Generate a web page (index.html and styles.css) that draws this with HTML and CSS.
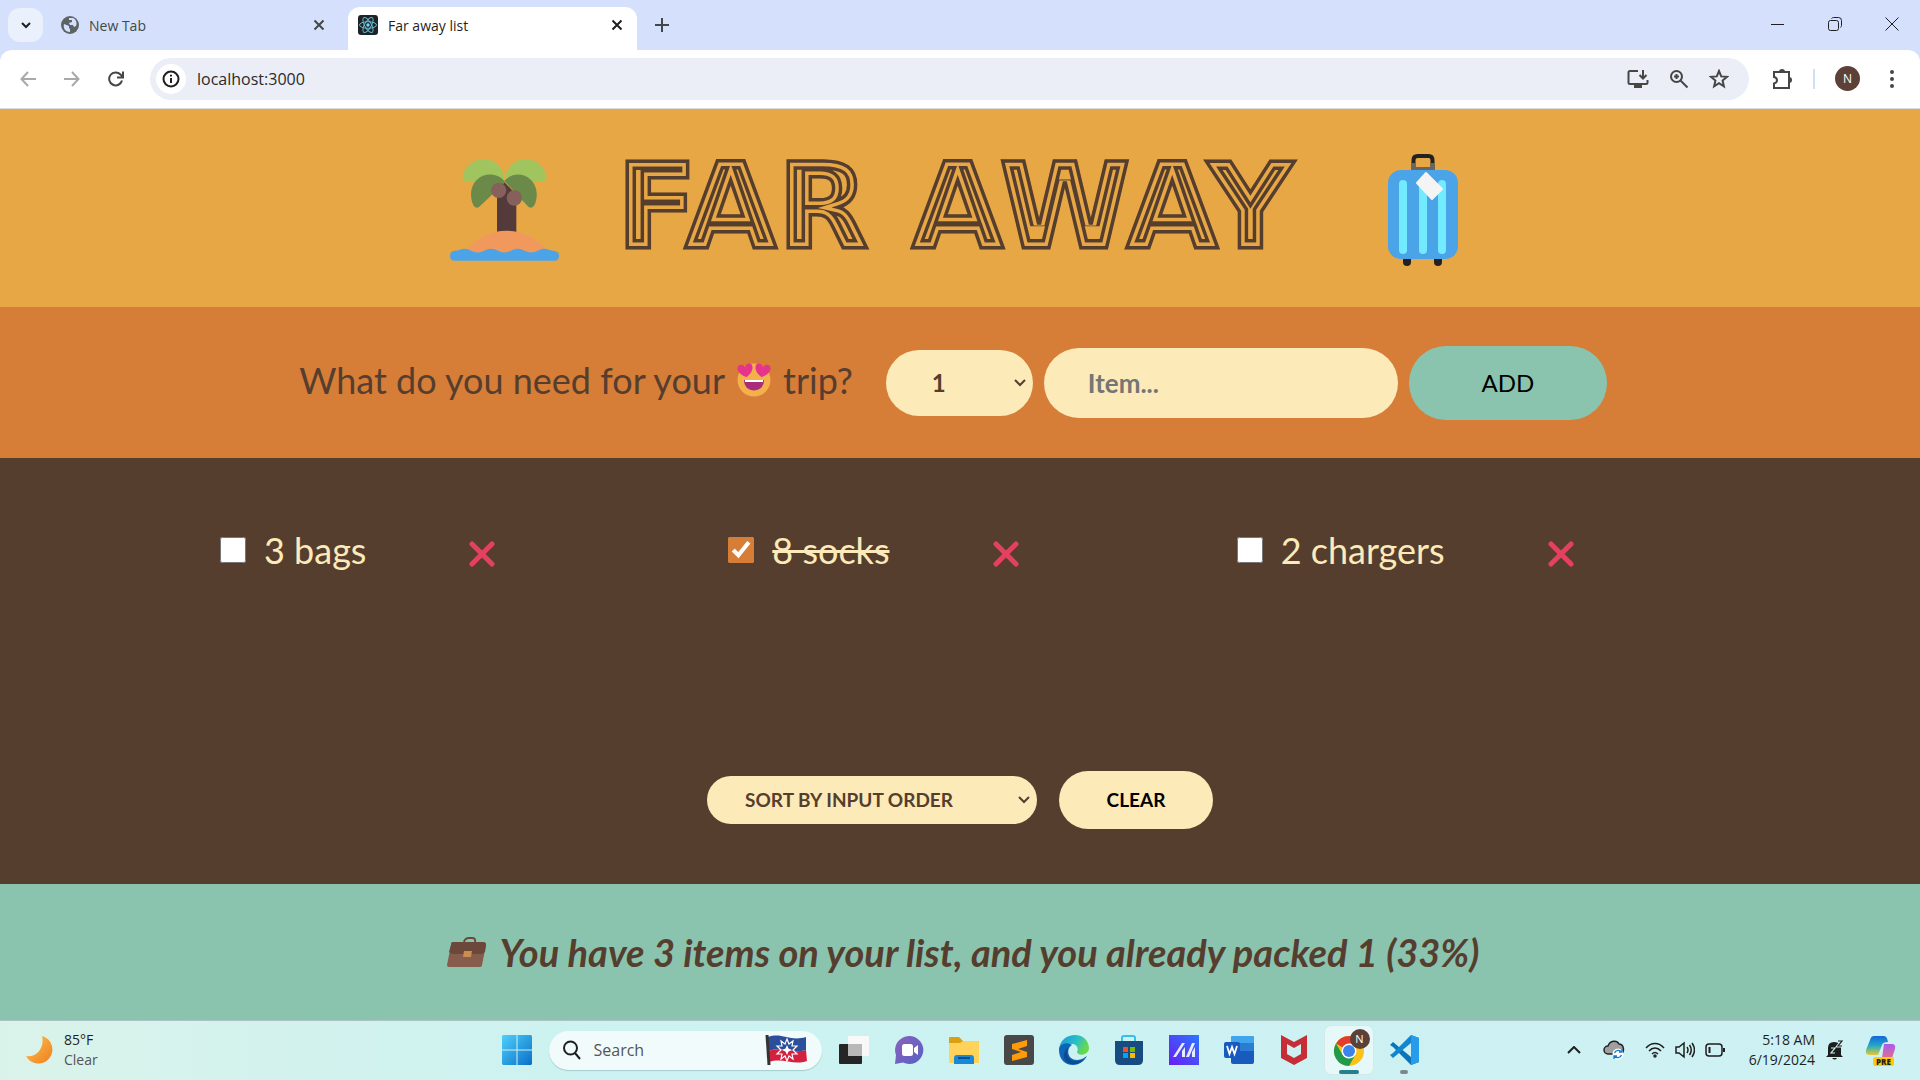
FILE: index.html
```html
<!DOCTYPE html>
<html lang="en">
<head>
<meta charset="utf-8">
<title>Far away list</title>
<link rel="stylesheet" href="styles.css">
</head>
<body>
<div class="tabstrip">
  <button class="tab-search" aria-label="Search tabs"><svg width="12" height="8" viewBox="0 0 12 8" class="line bold"><path d="M2 2l4 4 4-4"/></svg></button>
  <div class="tab">
    <svg width="18" height="18" viewBox="0 0 18 18"><circle cx="9" cy="9" r="9" fill="#5f6368"/><path d="M3 8l5 2v2l1 1v3C4 16 2 12 3 8zM8 2l4 0c4 2 4 6 3 8l-2 1-1-2H9L8 7l3-1V4H8z" fill="#d5e1fc"/></svg>
    <span>New Tab</span>
    <button class="close" aria-label="Close tab"><svg width="12" height="12" viewBox="0 0 12 12" class="line"><path d="M1.500 1.500l9 9M10.500 1.500l-9 9"/></svg></button>
  </div>
  <div class="tab active">
    <svg width="20" height="20" viewBox="0 0 20 20"><rect width="20" height="20" rx="3" fill="#1f2326"/><g fill="none" stroke="#61b8d0"><ellipse cx="10" cy="10" rx="8.500" ry="3.300"/><ellipse cx="10" cy="10" rx="8.500" ry="3.300" transform="rotate(60 10 10)"/><ellipse cx="10" cy="10" rx="8.500" ry="3.300" transform="rotate(120 10 10)"/></g><circle cx="10" cy="10" r="1.700" fill="#7fd7ee"/></svg>
    <span>Far away list</span>
    <button class="close" aria-label="Close tab"><svg width="12" height="12" viewBox="0 0 12 12" class="line"><path d="M1.500 1.500l9 9M10.500 1.500l-9 9"/></svg></button>
  </div>
  <button class="new-tab" aria-label="New tab"><svg width="14" height="14" viewBox="0 0 14 14" class="line"><path d="M7 0v14M0 7h14"/></svg></button>
  <div class="window-controls">
    <button aria-label="Minimize"><svg width="14" height="14" viewBox="0 0 14 14" class="line thin"><path d="M0 7.500h13"/></svg></button>
    <button aria-label="Restore"><svg width="14" height="14" viewBox="0 0 14 14" class="line thin"><rect x=".5" y="3.500" width="10" height="10" rx="2"/><path d="M3.500 1.500q1-1 2-1h5q3 0 3 3v5q0 1-1 2"/></svg></button>
    <button aria-label="Close window"><svg width="14" height="14" viewBox="0 0 14 14" class="line thin"><path d="M.5.5l13 13M13.500.5l-13 13"/></svg></button>
  </div>
</div>
<div class="toolbar-back"><div class="toolbar">
  <button class="nav muted" aria-label="Back"><svg width="16" height="16" viewBox="0 0 16 16" class="line"><path d="M16 8H1.500M8 1L1.500 8 8 15"/></svg></button>
  <button class="nav muted" aria-label="Forward"><svg width="16" height="16" viewBox="0 0 16 16" class="line"><path d="M0 8h14.500M8 1l6.500 7L8 15"/></svg></button>
  <button class="nav" aria-label="Reload"><svg width="16" height="16" viewBox="0 0 16 16" class="line"><path d="M14 9.500A6.500 6.500 0 1 1 12.500 3.500L14.500 5.500M15 .5v6H9"/></svg></button>
  <div class="address">
    <button class="info" aria-label="Site information"><svg width="18" height="18" viewBox="0 0 18 18" class="line"><circle cx="9" cy="9" r="7.500"/><path d="M9 8v5M9 4.800v1.700"/></svg></button>
    <input class="url" type="text" value="localhost:3000" aria-label="Address">
    <button aria-label="Install app"><svg width="22" height="20" viewBox="0 0 22 20" class="line"><path d="M11 2H3q-1.500 0-1.500 1.500v10Q1.500 15 3 15h16q1.500 0 1.500-1.500V11M16 1v8M12.500 6L16 9.500 19.500 6"/><path d="M7 15h8v4H7z" fill="#444746" stroke="none"/></svg></button>
    <button aria-label="Zoom"><svg width="20" height="20" viewBox="0 0 20 20" class="line"><circle cx="7.500" cy="7.500" r="5.500"/><path d="M11.500 11.500l7 7M7.500 5v5M5 7.500h5"/></svg></button>
    <button aria-label="Bookmark"><svg width="20" height="20" viewBox="0 0 20 20" class="line"><path d="M10 2l2.200 5.400 5.800.4-4.400 3.800 1.300 5.700L10 14.200l-4.900 3.100 1.300-5.700L2 7.800l5.800-.4z"/></svg></button>
  </div>
  <button class="puzzle" aria-label="Extensions"><svg width="22" height="22" viewBox="0 0 22 22" class="line"><path d="M3 4h15v16H3v-4.500c4-1 4-5.500 0-6.500z"/><path d="M8 4a3 3 0 0 1 6 0zM18 9a3 3 0 0 1 0 6z" fill="#444746" stroke="none"/></svg></button>
  <span class="divider"></span>
  <button class="avatar">N</button>
  <button class="menu" aria-label="Menu"><svg width="4" height="18" viewBox="0 0 4 18"><g fill="#444746"><circle cx="2" cy="2" r="2"/><circle cx="2" cy="9" r="2"/><circle cx="2" cy="16" r="2"/></g></svg></button>
</div></div>

<header class="logo">
  <svg width="110" height="102" viewBox="60 88 330 306">
    <g fill="#a0c55f"><path d="M104 154h119c0-38-27-65-62-65-36 0-63 28-63 58q0 7 6 7z"/><path d="M343 154H225c0-38 27-65 62-65 36 0 62 28 62 58q0 7-6 7z"/></g>
    <path d="M223 157l36 38v116h-58V180z" fill="#553a3b"/>
    <path d="M223 154c-20-24-60-26-83-3-21 21-20 54-10 76q7 12 18 4l76-72zM223 154c20-24 57-26 80-3 21 21 21 54 10 76q-7 12-18 4z" fill="#6b8a4a"/>
    <circle cx="206" cy="182" r="23" fill="#86605b"/><circle cx="253" cy="205" r="23" fill="#86605b"/>
    <path d="M105 366c65-84 185-84 250 0z" fill="#f1995c"/>
    <path d="M74 363q13 0 22-5 12-3 23 3c16 10 34 10 48 0q16-8 32 0c16 10 34 10 48 0q16-8 32 0c16 10 34 10 48 0q16-8 32 0l14 3q14 1 14 14 0 15-14 15H74q-14 0-14-15 0-14 14-15z" fill="#4ba3e8"/>
  </svg>
  <h1><svg class="wordmark" viewBox="0 0 704 170">
    <mask id="edge" maskUnits="userSpaceOnUse" x="0" y="0" width="704" height="170"><use href="#name" class="edge"/></mask>
    <g mask="url(#edge)">
      <g class="ring ring-3"><text id="name" x="-6" y="123">FAR AWAY</text></g>
      <use href="#name" class="ring ring-2"/>
      <use href="#name" class="ring ring-1"/>
    </g>
  </svg></h1>
  <svg width="70" height="112" viewBox="0 0 70 112">
    <path d="M25.500 17V6q0-4 4-4h11q4 0 4 4v11" fill="none" stroke="#222" stroke-width="4"/>
    <path d="M25.500 9v6h19V9" fill="none" stroke="#666" stroke-width="4"/>
    <rect x="15" y="100" width="8" height="12" rx="4" fill="#222"/><rect x="46" y="100" width="8" height="12" rx="4" fill="#222"/>
    <rect y="16" width="70" height="89" rx="13" fill="#4ba3e8"/>
    <g fill="#72eaff"><rect x="11" y="26" width="8" height="74" rx="4"/><rect x="31" y="26" width="8" height="74" rx="4"/><rect x="50" y="26" width="8" height="74" rx="4"/></g>
    <path d="M38 19l16 16-10 10-15-16z" fill="#f4f4f5" stroke="#f4f4f5" stroke-width="2" stroke-linejoin="round"/>
  </svg>
</header>

<form class="add-form" onsubmit="return false">
  <h3>What do you need for your
    <svg width="34" height="34" viewBox="0 0 34 34"><circle cx="17" cy="17" r="16.500" fill="#f3b04b"/><path d="M7 17h20c0 14-20 14-20 0z" fill="#a92c7a"/><path d="M8 17h18v2H8z" fill="#fff"/><path d="M9.500 14C5 13 0 9 .5 5 1 1 6 1 8 4c1-4 7-5 7.500 0 .3 4-3 8-6 10z" fill="#e6338b"/><path d="M24.500 14c4.500-1 9.500-5 9-9-.5-4-5.500-4-7.500-1-1-4-7-5-7.500 0-.3 4 3 8 6 10z" fill="#e6338b"/></svg>
    trip?</h3>
  <select class="qty" aria-label="Quantity"><option>1</option><option>2</option><option>3</option></select>
  <input class="item" type="text" placeholder="Item..." aria-label="Item">
  <button class="add">ADD</button>
</form>

<main class="list">
  <ul>
    <li><input type="checkbox" id="bags"><label for="bags">3 bags</label><button aria-label="Remove bags"><svg width="26" height="26" viewBox="0 0 26 26"><path d="M3 3l20 20M23 3L3 23"/></svg></button></li>
    <li><input type="checkbox" id="socks" checked><label for="socks" class="packed">8 socks</label><button aria-label="Remove socks"><svg width="26" height="26" viewBox="0 0 26 26"><path d="M3 3l20 20M23 3L3 23"/></svg></button></li>
    <li><input type="checkbox" id="chargers"><label for="chargers">2 chargers</label><button aria-label="Remove chargers"><svg width="26" height="26" viewBox="0 0 26 26"><path d="M3 3l20 20M23 3L3 23"/></svg></button></li>
  </ul>
  <div class="actions">
    <select class="sort" aria-label="Sort"><option>SORT BY INPUT ORDER</option><option>SORT BY DESCRIPTION</option></select>
    <button class="clear">CLEAR</button>
  </div>
</main>

<footer class="stats">
  <svg width="40" height="30" viewBox="0 0 40 30"><path d="M17 5q1-4 5-4h3q4 0 3 4" fill="none" stroke="#6b4839" stroke-width="2"/><path d="M6 5h30q3 0 3 3l-4 20q0 2-3 2H2q-2 0-2-2L4 8q0-3 2-3z" fill="#865c4c"/><path d="M6 5h30q3 0 3 3l-1 7-3 2H5l-3-2L4 8q0-3 2-3z" fill="#6b4839"/><path d="M17 14h8l-1 6h-8z" fill="#c98d4f"/></svg>
  <em>You have 3 items on your list, and you already packed 1 (33%)</em>
</footer>

<div class="taskbar">
  <div class="weather">
    <svg width="30" height="30" viewBox="0 0 30 30"><defs><linearGradient id="moon" x2="1" y2="1"><stop stop-color="#ffc04d"/><stop offset="1" stop-color="#ee8020"/></linearGradient></defs><path d="M17 1a14 14 0 1 1-16 20C12 23 20 12 17 1z" fill="url(#moon)"/></svg>
    <p>85°F<br><span>Clear</span></p>
  </div>
  <div class="apps">
    <button aria-label="Start"><svg width="30" height="30" viewBox="0 0 30 30"><defs><linearGradient id="win" x2="1" y2="1"><stop stop-color="#4fd0fb"/><stop offset="1" stop-color="#0a6fc8"/></linearGradient></defs><path d="M1 0h13.500v14.500H0V1zM15.500 0H29l1 1v13.500H15.500zM0 15.500h14.500V30H1l-1-1zM15.500 15.500H30V29l-1 1H15.500z" fill="url(#win)"/></svg></button>
    <label class="search">
      <svg width="20" height="20" viewBox="0 0 20 20" class="line"><circle cx="8.500" cy="8" r="6.500"/><path d="M13 13l5 6"/></svg>
      <input type="text" placeholder="Search">
      <svg width="44" height="32" viewBox="0 0 44 32"><path d="M3 3c14-5 22 5 38 0v13c-14 4-24-4-38 1z" fill="#2c4f9c"/><path d="M3 17c14-5 24 3 38-1l1 11c-14 5-24-4-38 1z" fill="#d3203f"/><path d="M2 1l2 30" stroke="#333" stroke-width="3"/><path d="M22 5l2 5 4-3-1 5 5 0-4 4 4 4-5 0 1 5-4-3-2 5-2-5-4 3 1-5-5 0 4-4-4-4 5 0-1-5 4 3z" fill="none" stroke="#fff" stroke-width="1.200"/><path d="M22 11l1.500 3.500L27 16l-3.500 1.500L22 21l-1.500-3.500L17 16l3.500-1.500z" fill="#fff"/></svg>
    </label>
    <button aria-label="Task view"><svg width="30" height="30" viewBox="0 0 30 30"><rect x="9" y="1" width="21" height="20" rx="1" fill="#f8f8f8"/><rect y="9" width="23" height="20" rx="1" fill="#252525"/><path d="M9 9h14v12H9z" fill="#b8b8b8"/></svg></button>
    <button aria-label="Chat"><svg width="30" height="30" viewBox="0 0 30 30"><defs><linearGradient id="chat" x2="1" y2="1"><stop stop-color="#8c61bd"/><stop offset="1" stop-color="#5661c4"/></linearGradient></defs><path d="M15 1a14 14 0 1 1-6 26.500L1 29l1-9A14 14 0 0 1 15 1z" fill="url(#chat)"/><rect x="8" y="9" width="11" height="12" rx="2.500" fill="#fff"/><path d="M20 13l4-3v10l-4-3z" fill="#fff"/></svg></button>
    <button aria-label="File Explorer"><svg width="30" height="30" viewBox="0 0 30 30"><path d="M0 3q0-1 1-1h9l4 4h15q1 0 1 2v18H0z" fill="#daa012"/><path d="M0 8h11l3-2h15q1 0 1 2v20H1q-1 0-1-2z" fill="#ffd35a"/><path d="M5 29v-6q0-3 3-3h14q3 0 3 3v6z" fill="#168ad8"/><path d="M9 23h12" stroke="#0c4f87" stroke-width="2"/></svg></button>
    <button aria-label="Sublime Text"><svg width="30" height="30" viewBox="0 0 30 30"><rect width="30" height="30" rx="3" fill="#484848"/><path d="M23 5v6l-9 3 9 3v5L8 26v-6l9-3-9-3V9z" fill="#ff9a0a"/></svg></button>
    <button aria-label="Edge"><svg width="30" height="30" viewBox="0 0 30 30"><defs><linearGradient id="edge-top" x2="1" y2=".4"><stop stop-color="#1497dc"/><stop offset=".6" stop-color="#29bfc8"/><stop offset="1" stop-color="#68d94c"/></linearGradient></defs><path d="M0 15C1-4 29-5 30 13c0 7-11 9-12 4 2-3 0-8-5-8C6 9 0 13 0 15z" fill="url(#edge-top)"/><path d="M0 15c0-6 8-9 13-5-6 3-5 15 5 15 5 0 8-3 10-4-3 6-9 9-14 9C6 30 0 24 0 15z" fill="#0f65b5"/><path d="M10 12c-6 9 3 19 15 12-6 9-22 6-20-5 1-4 3-6 5-7z" fill="#0d4a94"/></svg></button>
    <button aria-label="Microsoft Store"><svg width="30" height="30" viewBox="0 0 30 30"><path d="M8 7V3q0-2 2-2h9q2 0 2 2v4" fill="none" stroke="#39bdea" stroke-width="2"/><path d="M1 6h28v19q0 5-5 5H6q-5 0-5-5z" fill="#174c80"/><path d="M9 12h5v5H9z" fill="#f25022"/><path d="M16 12h5v5h-5z" fill="#7fba00"/><path d="M9 18h5v5H9z" fill="#00a4ef"/><path d="M16 18h5v5h-5z" fill="#ffb900"/></svg></button>
    <button aria-label="MyASUS"><svg width="30" height="30" viewBox="0 0 30 30"><defs><linearGradient id="asus" x1="0" y1="1" x2="1" y2="0"><stop stop-color="#6a1df5"/><stop offset="1" stop-color="#2a78ff"/></linearGradient></defs><path d="M0 0h30v30H0z" fill="url(#asus)"/><path d="M4 22h3l9-14h-3zM13 22h3V12l-3 4zM17 22h3l6-14h-3zM23 22h3V12l-3 5z" fill="#e8ecff"/></svg></button>
    <button aria-label="Word"><svg width="30" height="30" viewBox="0 0 30 30"><rect x="7" y="1" width="23" height="28" rx="2" fill="#185abd"/><path d="M7 3q0-2 2-2h19q2 0 2 2v6H7z" fill="#41a5ee"/><path d="M7 8h23v8H7z" fill="#2b7cd3"/><rect y="7" width="16" height="16" rx="2" fill="#185abd"/><path d="M3 11l2.500 8L8 12l2.500 7L13 11" fill="none" stroke="#fff" stroke-width="1.800"/></svg></button>
    <button aria-label="McAfee"><svg width="30" height="30" viewBox="0 0 30 30"><path d="M2 0l13 7 13-7v23l-13 7-13-7zM8 9v10l7 4 7-4V9l-7 4z" fill="#c42e34" fill-rule="evenodd"/></svg></button>
    <button class="running" aria-label="Chrome"><svg width="38" height="38" viewBox="0 0 38 38"><circle cx="19" cy="20" r="15" fill="#fbc116"/><path d="M19 20L6 12.500A15 15 0 0 1 32 12.500H19z" fill="#e33b2e"/><path d="M6 12.500A15 15 0 0 0 19 35l6.500-11.500-13 0z" fill="#229a4c"/><circle cx="19" cy="20" r="7.500" fill="#fff"/><circle cx="19" cy="20" r="6" fill="#3c83ee"/></svg><span class="badge">N</span></button>
    <button class="idle" aria-label="Visual Studio Code"><svg width="30" height="30" viewBox="0 0 30 30"><path d="M22 0l8 3v24l-8 3L4 12 1 10l3-3 18 15z" fill="#0a73ba"/><path d="M22 0L4 18l-3 2 3 3L22 8z" fill="#1186cf"/><path d="M22 0l8 3v24l-8 3z" fill="#279ceb"/></svg></button>
  </div>
  <div class="tray">
    <button aria-label="Hidden icons"><svg width="14" height="8" viewBox="0 0 14 8" class="line"><path d="M1 7l6-6 6 6"/></svg></button>
    <svg width="22" height="20" viewBox="0 0 22 20"><path d="M5 14a4 4 0 0 1 0-8c2-6 9-6 11-2 5 0 6 8 2 10z" fill="#a0a0a0" stroke="#222" stroke-width="1.500"/><circle cx="15" cy="14" r="5.500" fill="#fff"/><path d="M11.500 13a4 4 0 0 1 7-1M18.500 15a4 4 0 0 1-7 1M19 9v3h-3M11 19v-3h3" fill="none" stroke="#1778c8" stroke-width="1.300"/></svg>
    <div class="status">
      <svg width="20" height="16" viewBox="0 0 20 16" class="line medium"><path d="M1 6c5-6 13-6 18 0M4 9c3.500-4 8.500-4 12 0M7 12c2-2 4-2 6 0"/><circle cx="10" cy="14" r="1"/></svg>
      <svg width="20" height="18" viewBox="0 0 20 18" class="line medium"><path d="M1 6h3l5-4v14l-5-4H1zM12 6q2 3 0 6M14.500 4q3.500 5 0 10M17 2q5 7 0 14"/></svg>
      <svg width="20" height="14" viewBox="0 0 20 14" class="line medium"><rect x="1" y="1" width="16" height="12" rx="3"/><path d="M4.500 4v6M19 5v4" stroke-width="2"/></svg>
    </div>
    <p class="clock">5:18 AM<br>6/19/2024</p>
    <svg class="bell" width="18" height="20" viewBox="0 0 18 20"><path d="M2 15V8q0-6 6-6 7 0 7 6v7l2 2H0zM6 18h5q-2 3-5 0z" fill="#1d1d1d"/><path d="M5 8h4l-4 5h4" fill="none" stroke="#cff1f2" stroke-width="1.200"/><path d="M12 1h4l-4 5h4" fill="none" stroke="#cff1f2" stroke-width="3"/><path d="M12 1h4l-4 5h4" fill="none" stroke="#1d1d1d" stroke-width="1.200"/></svg>
    <button class="copilot"><svg width="30" height="28" viewBox="0 0 30 28"><defs><linearGradient id="cpa" x2="0" y2="1"><stop stop-color="#1567d8"/><stop offset=".5" stop-color="#1fa8c8"/><stop offset="1" stop-color="#e6c933"/></linearGradient><linearGradient id="cpb" x2="0" y2="1"><stop stop-color="#a95bf0"/><stop offset="1" stop-color="#f5766a"/></linearGradient></defs><path d="M8 0h10q3 0 4 6-5 0-6 3l-4 10H4q-5 0-4-5L4 4q1-4 4-4z" fill="url(#cpa)"/><path d="M18 8h8q4 0 3 5l-3 9q-1 5-5 5h-9q3-1 4-5z" fill="url(#cpb)"/></svg><span class="pre">PRE</span></button>
  </div>
</div>
</body>
</html>
```
FILE: styles.css
```css
:root {
  --brown: #563e2f;
  --cream: #fceab9;
  --orange: #d67d37;
  --yellow: #e8a745;
  --green: #8ac4af;
}
* { box-sizing: border-box; }
body {
  margin: 0;
  min-height: 100vh;
  display: flex;
  flex-direction: column;
  font-family: "Open Sans", "Noto Sans", sans-serif;
  color: #1f1f1f;
}
h1, h3, p, ul { margin: 0; padding: 0; font-weight: 400; }
button, input, select { font: inherit; color: inherit; border: 0; padding: 0; background: none; }
button { display: inline-flex; align-items: center; justify-content: center; }
svg { flex: none; display: block; }
.line { fill: none; stroke: currentColor; stroke-width: 2; }
.thin { stroke-width: 1; }
.medium { stroke-width: 1.5; }
.bold { stroke-width: 2; }

/* Browser chrome */
.tabstrip { display: flex; height: 50px; background: #d5e1fc; padding: 7px 0 0 8px; }
.tab-search { width: 35px; height: 34px; margin-top: 1px; border-radius: 12px; background: #eaf1fc; }
.tab { display: flex; align-items: center; gap: 10px; width: 289px; height: 43px; padding: 0 11px 7px 10px; font-size: 14px; }
.tab:not(.active) { width: 296px; padding-left: 18px; margin-right: 9px; color: #444746; }
.tab.active { background: #fff; border-radius: 12px 12px 0 0; }
.close { width: 18px; height: 18px; margin-left: auto; }
.new-tab { width: 34px; height: 36px; margin-left: 8px; color: #444746; }
.window-controls { display: flex; margin-left: auto; }
.window-controls button { width: 57px; height: 34px; }
.window-controls svg { overflow: visible; }
.toolbar-back { background: #d5e1fc; }
.toolbar { display: flex; align-items: center; height: 59px; padding: 0 16px 1px 6px; background: #fff; border-radius: 12px 12px 0 0; border-bottom: 1px solid #dcdde2; color: #444746; }
.nav { width: 44px; height: 40px; }
.muted { color: #a8a9a9; }
.address { flex: 1; display: flex; align-items: center; gap: 20px; height: 42px; margin-left: 12px; padding: 0 20px 0 6px; border-radius: 21px; background: #ebeef7; }
.info { width: 30px; height: 30px; border-radius: 50%; background: #fff; color: #1f1f1f; }
.url { flex: 1; margin-left: -9px; font-size: 16px; color: #2a2a2a; }
.puzzle { margin-left: 22px; }
.divider { width: 2px; height: 20px; margin: 0 20px; background: #d0def8; }
.avatar { width: 25px; height: 25px; border-radius: 50%; background: #5d4037; color: #fff; font-size: 12px; }
.menu { width: 24px; margin-left: 20px; }

/* Packing list */
.logo { display: flex; align-items: center; justify-content: center; gap: 62px; height: 198px; padding: 4px 12px 0 0; background: var(--yellow); }
.wordmark { width: 704px; height: 170px; }
.wordmark text { font: 700 120px "DejaVu Sans", sans-serif; }
.edge { fill: #fff; stroke: #fff; stroke-width: 3px; }
.ring { fill: var(--yellow); }
.ring-3 { stroke: var(--brown); stroke-width: 18px; }
.ring-2 { stroke: var(--yellow); stroke-width: 11px; fill: none; }
.ring-1 { stroke: var(--brown); stroke-width: 4px; fill: none; }
.add-form, .list, .stats { font-family: "Lato", sans-serif; }
.add-form { display: flex; align-items: center; justify-content: center; gap: 11px; height: 151px; padding-right: 14px; background: var(--orange); color: var(--brown); }
.add-form h3 { display: flex; align-items: center; gap: 12px; margin-right: 22px; padding-bottom: 6px; font-size: 36px; }
select { appearance: none; background: var(--cream) url("data:image/svg+xml,%3Csvg xmlns='http://www.w3.org/2000/svg' width='12' height='8'%3E%3Cpath d='M1 1l5 5 5-5' fill='none' stroke='%23563e2f' stroke-width='2'/%3E%3C/svg%3E") no-repeat right 7px center; color: var(--brown); font-weight: 700; }
.qty { width: 147px; height: 66px; padding-left: 46px; border-radius: 33px; font-size: 24px; }
.item { width: 354px; height: 70px; padding: 0 44px; border-radius: 35px; background: var(--cream); font-size: 26px; font-weight: 700; }
.item::placeholder { color: #757575; }
.add { width: 198px; height: 74px; border-radius: 37px; background: var(--green); color: #000; font-size: 24px; }
.list { flex: 1; display: flex; flex-direction: column; justify-content: space-between; padding: 70px 175px 55px 220px; background: var(--brown); color: var(--cream); }
.list ul { display: grid; grid-template-columns: repeat(3, 1fr); list-style: none; }
.list li { display: flex; align-items: center; height: 48px; font-size: 36px; }
.list li input { width: 26px; height: 26px; margin: 0 18px 4px 0; accent-color: var(--orange); }
.list li label { margin-bottom: 4px; }
.list li button { margin: 4px 0 0 103px; }
.list li path { stroke: #e5405f; stroke-width: 5px; stroke-linecap: round; }
.packed { text-decoration: line-through; }
.actions { display: flex; align-items: center; justify-content: center; gap: 22px; padding-right: 45px; }
.sort { width: 330px; height: 48px; padding: 0 0 2px 38px; border-radius: 24px; font-size: 19px; }
.clear { width: 154px; height: 58px; padding-bottom: 2px; border-radius: 29px; background: var(--cream); color: #000; font-size: 19px; font-weight: 700; }
.stats { display: flex; align-items: center; justify-content: center; gap: 13px; height: 136px; padding-left: 6px; background: var(--green); color: var(--brown); font-size: 38px; font-weight: 700; }

/* Taskbar */
.taskbar { display: grid; grid-template-columns: 1fr auto 1fr; align-items: center; height: 60px; padding-bottom: 1px; border-top: 1px solid #adc3c3; background: linear-gradient(90deg, #daf3ea, #ccf2f1 30%, #cef1f3); font-size: 14px; line-height: 20px; }
.weather { display: flex; align-items: center; gap: 9px; padding-left: 25px; }
.weather span { color: #555; }
.apps { display: flex; align-items: center; gap: 7px; }
.apps button { position: relative; width: 48px; height: 48px; border-radius: 6px; }
.search { display: flex; align-items: center; gap: 12px; width: 273px; height: 39px; margin: 0 1px; padding: 0 13px; border-radius: 20px; background: #f1fbfb; box-shadow: 0 1px 1px #a5cccc; font-size: 16px; }
.search input { flex: 1; min-width: 0; }
.search input::placeholder { color: #555; }
.running { background: #e6f8f8; box-shadow: 0 0 0 1px #d4e9e9; }
.running::after, .idle::after { content: ""; position: absolute; bottom: 0; width: 20px; height: 4px; border-radius: 2px; background: #22808f; }
.idle::after { width: 8px; background: #7d8a8a; }
.badge { position: absolute; top: 3px; right: 3px; width: 20px; height: 20px; border-radius: 50%; background: #5d4037; color: #fff; font-size: 11px; text-align: center; }
.tray { display: flex; align-items: center; justify-content: flex-end; padding-right: 24px; }
.tray button:first-child { margin-right: 22px; }
.status { display: flex; align-items: center; gap: 10px; margin: 0 20px; }
.clock { width: 70px; text-align: right; white-space: nowrap; }
.bell { margin: 0 22px 0 11px; }
.copilot { position: relative; }
.pre { position: absolute; left: 7px; bottom: -2px; padding: 0 3px; border-radius: 2px; background: #ffca0a; font-size: 8px; line-height: 9px; font-weight: 800; }
```
